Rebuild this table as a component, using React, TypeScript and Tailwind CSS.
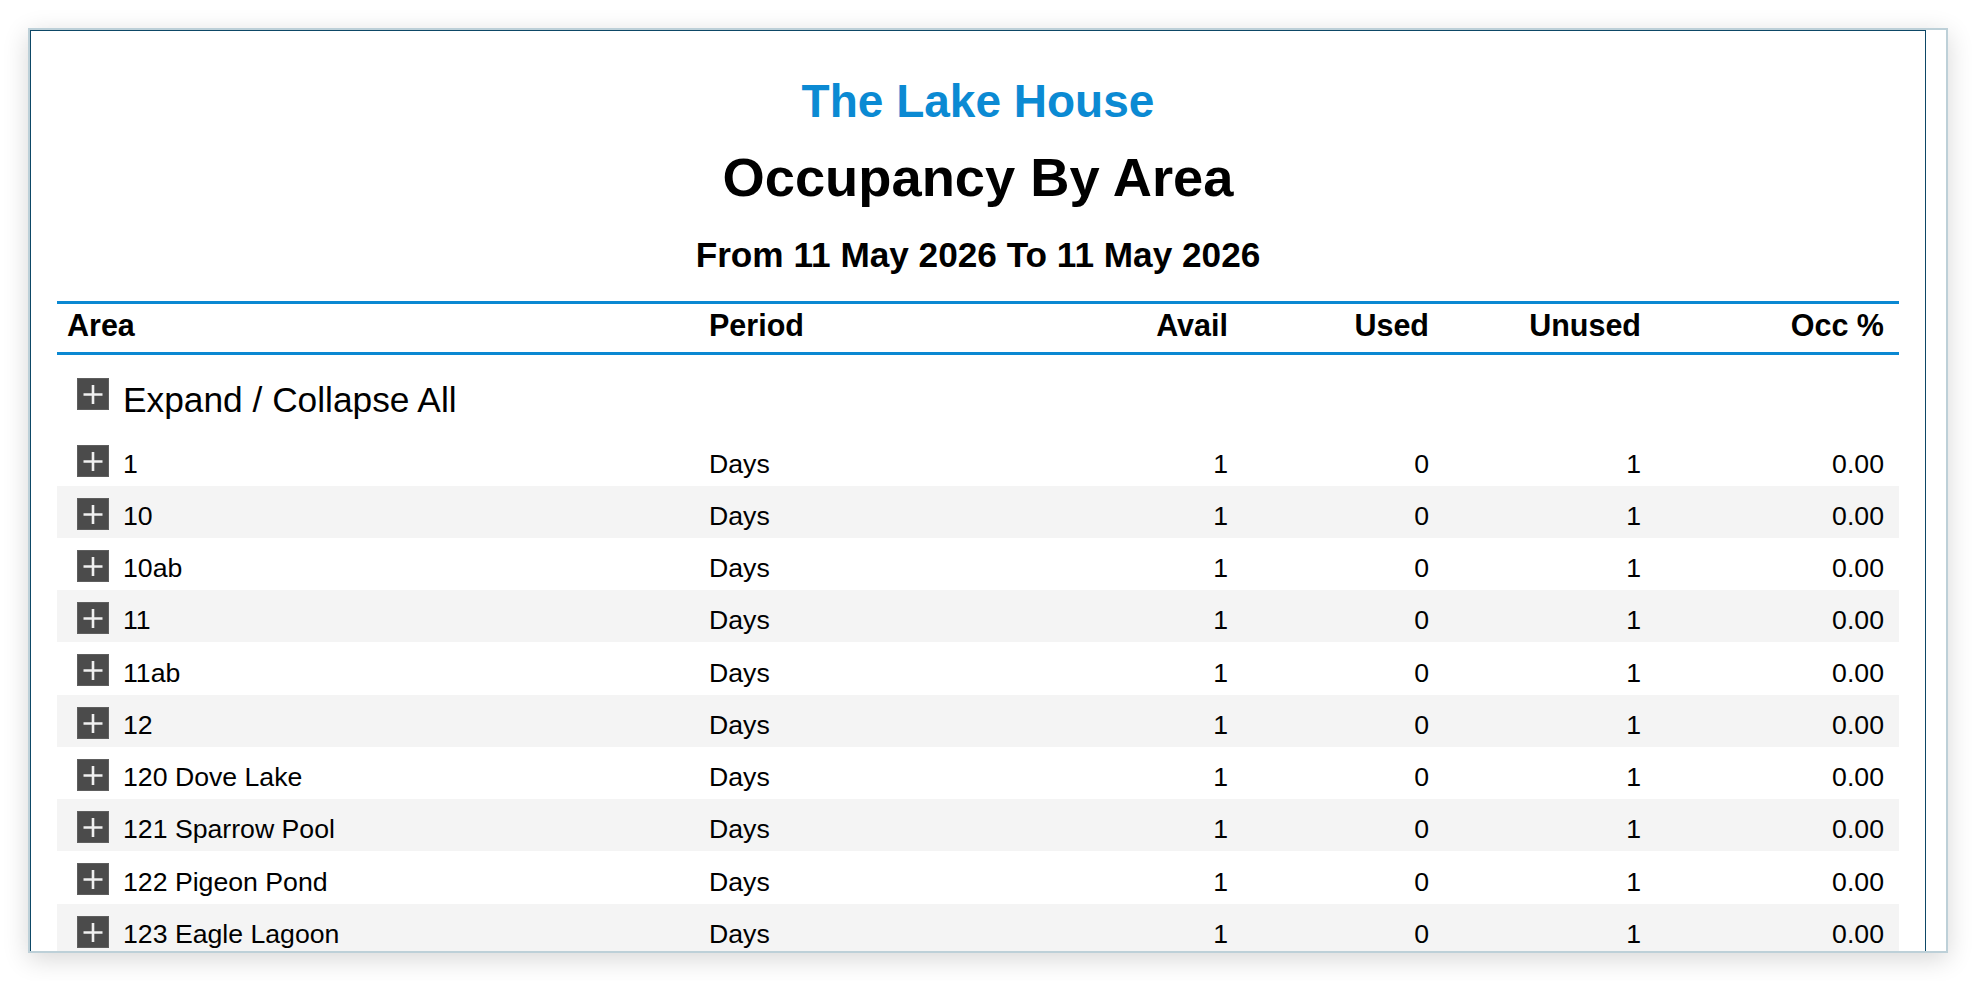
import React from "react";

const rows = [
  "1",
  "10",
  "10ab",
  "11",
  "11ab",
  "12",
  "120 Dove Lake",
  "121 Sparrow Pool",
  "122 Pigeon Pond",
  "123 Eagle Lagoon",
];

function PlusIcon() {
  return (
    <svg width="32" height="32" viewBox="0 0 32 32" className="shrink-0 block">
      <rect x="0" y="0" width="32" height="32" fill="#4b4b4b" />
      <rect x="0.5" y="0.5" width="31" height="31" fill="none" stroke="#5e5e5e" strokeWidth="1" />
      <path d="M16 7v19M6.5 16.5h19" stroke="#f0f0f0" strokeWidth="2.6" />
    </svg>
  );
}

const grid =
  "grid grid-cols-[642px_301px_242px_201px_212px_244px]";

export default function App() {
  return (
    <div className="w-[1976px] h-[981px] bg-white overflow-hidden pt-[28px] pl-[28px] font-['Liberation_Sans',Arial,sans-serif] text-black">
      <div className="flex w-[1920px] h-[925px] border-2 border-[#bdd0d8] bg-white shadow-[0_6px_24px_rgba(0,0,0,0.16)]">
        <div className="flex-1 min-w-0 border-x border-t border-[#0d4766] overflow-hidden px-[26px]">
          <div className="pt-[47px] flex flex-col items-center">
            <div className="text-[46px] leading-none font-bold text-[#0b8ad3]">The Lake House</div>
            <div className="mt-[27px] text-[54.3px] leading-none font-bold">Occupancy By Area</div>
            <div className="mt-[32px] text-[35.2px] leading-none font-bold">From 11 May 2026 To 11 May 2026</div>
          </div>

          <div className={`${grid} mt-[28px] h-[54px] border-y-[3px] border-[#0a88d2] text-[30.5px] leading-none font-bold`}>
            <div className="pl-[10px] pt-[6px]">Area</div>
            <div className="pl-[10px] pt-[6px]">Period</div>
            <div className="pr-[14px] pt-[6px] text-right">Avail</div>
            <div className="pr-[14px] pt-[6px] text-right">Used</div>
            <div className="pr-[14px] pt-[6px] text-right">Unused</div>
            <div className="pr-[15px] pt-[6px] text-right">Occ %</div>
          </div>

          <div className="h-[78.75px] flex items-center pl-[20px] gap-[14px]">
            <PlusIcon />
            <span className="text-[35.3px] leading-none pt-[12px]">Expand / Collapse All</span>
          </div>

          {rows.map((name, i) => (
            <div
              key={name}
              className={`${grid} h-[52.25px] items-center text-[26.67px] leading-none ${
                i % 2 === 1 ? "bg-[#f4f4f4]" : "bg-white"
              }`}
            >
              <div className="flex items-center pl-[20px] gap-[14px]">
                <div className="mt-[4px]">
                  <PlusIcon />
                </div>
                <span className="pt-[9px]">{name}</span>
              </div>
              <div className="pl-[10px] pt-[9px]">Days</div>
              <div className="pr-[14px] pt-[9px] text-right">1</div>
              <div className="pr-[14px] pt-[9px] text-right">0</div>
              <div className="pr-[14px] pt-[9px] text-right">1</div>
              <div className="pr-[15px] pt-[9px] text-right">0.00</div>
            </div>
          ))}
        </div>
        <div className="w-[20px] shrink-0 bg-white" />
      </div>
    </div>
  );
}
